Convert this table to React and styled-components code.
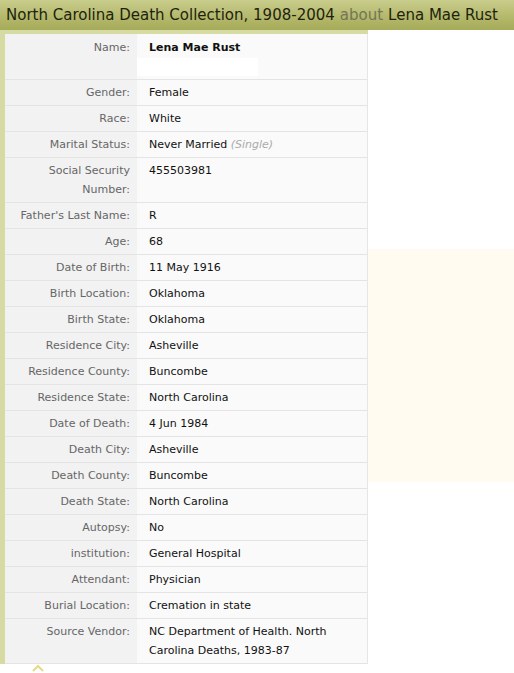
import React from "react"
import styled, { createGlobalStyle } from "styled-components"

const GlobalStyle = createGlobalStyle`
  body {
    margin: 0;
    background: #ffffff;
    font-family: "DejaVu Sans", Verdana, sans-serif;
  }
`

const Page = styled.div`
  width: 514px;
  height: 673px;
  overflow: hidden;
  background: #ffffff;
`

const TitleBar = styled.h1`
  margin: 0;
  height: 30px;
  padding: 0 0 0 6px;
  display: flex;
  align-items: center;
  font-size: 15px;
  font-weight: normal;
  color: #1f1f10;
  white-space: nowrap;
  background: linear-gradient(180deg, #c9cd8c 0%, #b4b96c 55%, #a6ab5a 100%);
`

const About = styled.span`
  color: #737558;
  margin: 0 5px;
`

const Body = styled.div`
  display: flex;
  align-items: flex-start;
`

const Record = styled.div`
  width: 363px;
  background: #d5dba3;
  padding: 4px 0 0 5px;
`

const Table = styled.div`
  display: grid;
  grid-template-columns: 132px 1fr;
  background: #fafafa;
  border-right: 1px solid #e6e6e6;
`

const Label = styled.div`
  background: #f2f2f2;
  color: #666666;
  text-align: right;
  padding: ${p => (p.$tall ? "4px" : "3px")} 7px 3px 0;
  font-size: 11px;
  line-height: 19px;
  border-bottom: 1px solid #e4e4e4;
`

const Value = styled.div`
  color: #111111;
  padding: ${p => (p.$tall ? "4px" : "3px")} 8px 3px 12px;
  font-size: 11px;
  line-height: 19px;
  font-weight: ${p => (p.$tall ? "bold" : "normal")};
  border-bottom: 1px solid #e4e4e4;
`

const Note = styled.span`
  color: #aaaaaa;
  font-style: italic;
`

const Blank = styled.div`
  width: 121px;
  height: 18px;
  margin: 1px 0 0 -12px;
  background: #ffffff;
`

const Side = styled.aside`
  flex: 1;
  height: 233px;
  margin-top: 219px;
  background: #fffbf1;
`

const Footer = styled.div`
  padding: 0 0 0 32px;
  height: 10px;
`

const Caret = styled.svg`
  display: block;
`

const rows = [
  ["Gender", "Female"],
  ["Race", "White"],
  ["Marital Status", <>Never Married <Note>(Single)</Note></>],
  ["Social Security Number", "455503981"],
  ["Father's Last Name", "R"],
  ["Age", "68"],
  ["Date of Birth", "11 May 1916"],
  ["Birth Location", "Oklahoma"],
  ["Birth State", "Oklahoma"],
  ["Residence City", "Asheville"],
  ["Residence County", "Buncombe"],
  ["Residence State", "North Carolina"],
  ["Date of Death", "4 Jun 1984"],
  ["Death City", "Asheville"],
  ["Death County", "Buncombe"],
  ["Death State", "North Carolina"],
  ["Autopsy", "No"],
  ["institution", "General Hospital"],
  ["Attendant", "Physician"],
  ["Burial Location", "Cremation in state"],
  ["Source Vendor", "NC Department of Health. North Carolina Deaths, 1983-87"],
]

const App = () => {
  return (
    <Page>
      <GlobalStyle />
      <TitleBar>
        North Carolina Death Collection, 1908-2004<About>about</About>Lena Mae Rust
      </TitleBar>
      <Body>
        <Record>
          <Table>
            <Label $tall>Name:</Label>
            <Value $tall>
              Lena Mae Rust
              <Blank />
            </Value>
            {rows.map(([label, value]) => (
              <React.Fragment key={label}>
                <Label>{label}:</Label>
                <Value>{value}</Value>
              </React.Fragment>
            ))}
          </Table>
        </Record>
        <Side />
      </Body>
      <Footer>
        <Caret width="12" height="8" viewBox="0 0 12 8">
          <path d="M1 7 L6 2 L11 7" fill="none" stroke="#e8d88a" strokeWidth="2" />
        </Caret>
      </Footer>
    </Page>
  )
}

export default App
